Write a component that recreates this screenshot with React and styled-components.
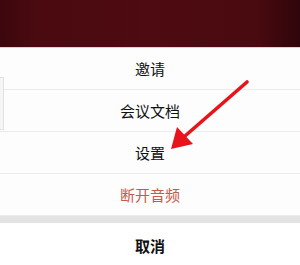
import React from "react";
import styled, { createGlobalStyle } from "styled-components";

const GlobalStyle = createGlobalStyle`
	html, body {
		margin: 0;
		padding: 0;
		background: #ffffff;
	}
	body {
		font-family: "Liberation Sans", "Noto Sans CJK SC", sans-serif;
	}
`;

const actions = [
	{ label: "邀请" },
	{ label: "会议文档" },
	{ label: "设置" },
	{ label: "断开音频", danger: true },
];

const App = () => {
	return (
		<>
			<GlobalStyle />
			<Screen>
				<Header />
				<Sheet>
					<SideEdge />
					{actions.map((item, index) => (
						<ActionRow key={index} $danger={item.danger}>
							{item.label}
						</ActionRow>
					))}
					<Gap />
					<CancelRow>取消</CancelRow>
				</Sheet>
				<Arrow viewBox="0 0 300 265" width="300" height="265">
					<line x1="247" y1="82" x2="185" y2="136" stroke="#e8131b" strokeWidth="3.6" strokeLinecap="round" />
					<polygon points="171,149 177,127 193,144" fill="#e8131b" />
				</Arrow>
			</Screen>
		</>
	);
};

export default App;

const Screen = styled.div`
	position: relative;
	width: 300px;
	height: 265px;
	overflow: hidden;
	background: #ffffff;
`;

const Header = styled.div`
	height: 47px;
	background: linear-gradient(
		90deg,
		#3c070d 0%,
		#4a0a10 12%,
		#4e0b11 50%,
		#490a10 85%,
		#2f060b 100%
	);
	border-bottom: 1px solid #d9d2d3;
`;

const Sheet = styled.div`
	position: relative;
	display: flex;
	flex-direction: column;
	background: #fdfdfd;
`;

const SideEdge = styled.div`
	position: absolute;
	left: 0;
	top: 29px;
	width: 3px;
	height: 51px;
	border: 1px solid #e2e2e2;
	border-left: none;
	background: #f6f6f6;
`;

const ActionRow = styled.div`
	height: 41px;
	display: flex;
	align-items: center;
	justify-content: center;
	font-size: 15px;
	color: ${(p) => (p.$danger ? "#c65a4c" : "#111111")};
	border-bottom: 1px solid #ececec;
`;

const Gap = styled.div`
	height: 7px;
	background: #e3e3e3;
`;

const CancelRow = styled.div`
	height: 44px;
	display: flex;
	align-items: center;
	justify-content: center;
	font-size: 15px;
	font-weight: bold;
	color: #111111;
	background: #ffffff;
`;

const Arrow = styled.svg`
	position: absolute;
	left: 0;
	top: 0;
	pointer-events: none;
`;
